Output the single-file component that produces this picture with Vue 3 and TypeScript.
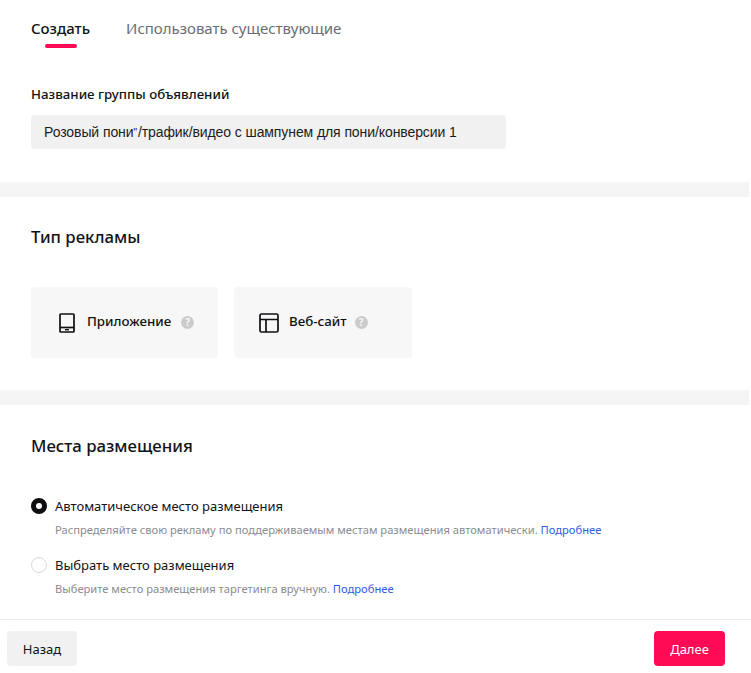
<script setup lang="ts">
const tabs: string[] = ['Создать', 'Использовать существующие']
</script>

<template>
  <div class="page">
    <section class="sec first">
      <div class="tabs">
        <div v-for="(t, i) in tabs" :key="t" class="tab" :class="{ active: i === 0 }">{{ t }}</div>
      </div>
      <div class="label">Название группы объявлений</div>
      <div class="input">Розовый пони<span class="quote">"</span>/трафик/видео с шампунем для пони/конверсии 1</div>
    </section>
    <section class="sec second">
      <h2>Тип рекламы</h2>
      <div class="cards">
        <div class="card app">
          <svg width="20" height="20" viewBox="0 0 20 20" fill="none" stroke="#0f1014" stroke-width="1.7">
            <path d="M3 1.800a.8.8 0 0 1 .8-.8h12.400a.8.8 0 0 1 .8.8v16.400a.8.8 0 0 1-.8.8H3.800a.8.8 0 0 1-.8-.8z" />
            <path d="M3 14.500h14" />
            <path d="M8 16.700h4" stroke-width="1.400" />
          </svg>
          <span class="name">Приложение</span>
          <span class="help">?</span>
        </div>
        <div class="card web">
          <svg width="20" height="20" viewBox="0 0 20 20" fill="none" stroke="#0f1014" stroke-width="1.7">
            <rect x="1" y="1" width="18" height="18" rx="1.500" />
            <path d="M1 6.500h18M7 6.500V19" />
          </svg>
          <span class="name">Веб-сайт</span>
          <span class="help">?</span>
        </div>
      </div>
    </section>
    <section class="sec third">
      <h2>Места размещения</h2>
      <div class="opt">
        <span class="radio on"></span>
        <span class="opt-t">Автоматическое место размещения</span>
      </div>
      <div class="desc">Распределяйте свою рекламу по поддерживаемым местам размещения автоматически. <a>Подробнее</a></div>
      <div class="opt two">
        <span class="radio"></span>
        <span class="opt-t">Выбрать место размещения</span>
      </div>
      <div class="desc">Выберите место размещения таргетинга вручную. <a>Подробнее</a></div>
    </section>
    <footer class="foot">
      <button class="btn back">Назад</button>
      <button class="btn next">Далее</button>
    </footer>
  </div>
</template>

<style>
html, body { margin: 0; background: #fff; overflow: hidden; }
</style>

<style scoped>
.page {
  width: 751px;
  height: 673px;
  font-family: "Noto Sans", "Open Sans", sans-serif;
  color: #111216;
  display: flex;
  flex-direction: column;
  overflow: hidden;
}
.sec { width: 749px; box-sizing: border-box; padding-left: 31px; }
.first { height: 182px; padding-top: 17px; }
.second { height: 208px; border-top: 15px solid #f5f5f5; padding-top: 28px; }
.third { height: 229px; border-top: 15px solid #f5f5f5; padding-top: 29px; }
.tabs { display: flex; gap: 36px; }
.tab { font-size: 15px; line-height: 22px; color: #6b6d72; position: relative; height: 31px; letter-spacing: -0.02px; }
.tab.active { font-weight: 500; color: #111216; }
.tab.active::after {
  content: "";
  position: absolute;
  left: 14px;
  width: 32px;
  height: 4px;
  bottom: 0;
  border-radius: 2px;
  background: #fe0a55;
}
.label { margin-top: 37px; font-size: 13.3px; font-weight: 500; line-height: 18px; }
.input {
  margin-top: 12px;
  width: 475px;
  height: 34px;
  border-radius: 4px;
  background: #f1f1f1;
  box-sizing: border-box;
  padding-left: 13px;
  font-family: "Liberation Sans", Arial, sans-serif;
  font-size: 14px;
  letter-spacing: -0.09px;
  line-height: 34px;
  color: #1c1c1c;
}
.quote { font-size: 10px; vertical-align: 1px; margin-right: 1px; }
h2 { margin: 0; font-size: 16.8px; font-weight: 500; line-height: 24px; }
.cards { display: flex; gap: 16px; margin-top: 38px; }
.card {
  height: 71px;
  border-radius: 4px;
  background: #f7f7f7;
  display: flex;
  align-items: center;
  box-sizing: border-box;
}
.app { width: 187px; padding-left: 26px; }
.web { width: 178px; padding-left: 25px; }
.card svg { flex: none; margin-right: 10px; }
.name { font-size: 13.3px; font-weight: 500; line-height: 18px; margin-bottom: 4px; }
.help {
  width: 13px;
  height: 13px;
  border-radius: 50%;
  background: #cbcbcb;
  color: #f7f7f7;
  font-size: 10px;
  font-weight: 700;
  line-height: 13px;
  text-align: center;
  margin-left: 10px;
}
.web .help { margin-left: 8px; }
.opt { display: flex; align-items: center; margin-top: 38px; height: 20px; }
.opt.two { margin-top: 17px; }
.radio {
  width: 16px;
  height: 16px;
  box-sizing: border-box;
  border-radius: 50%;
  border: 1px solid #d9d9d9;
  margin-right: 8px;
  flex: none;
}
.radio.on { border: 5px solid #0f0f12; background: #fff; }
.opt-t { font-size: 13px; line-height: 20px; }
.desc { margin-left: 24px; margin-top: 6px; font-size: 11.16px; line-height: 16px; color: #8a8c90; white-space: nowrap; }
.desc a { color: #2f5be6; }
.foot {
  flex: 1;
  border-top: 1px solid #ececec;
  display: flex;
  justify-content: space-between;
  align-items: flex-start;
  padding: 11px 26px 0 7px;
  width: 751px;
  box-sizing: border-box;
}
.btn {
  height: 35px;
  width: 70px;
  border: 0;
  border-radius: 4px;
  font: 400 13px "Noto Sans", sans-serif;
  padding: 0;
}
.back { background: #f1f1f1; color: #111216; }
.next { background: #fe0a55; color: #fff; width: 71px; }
</style>
